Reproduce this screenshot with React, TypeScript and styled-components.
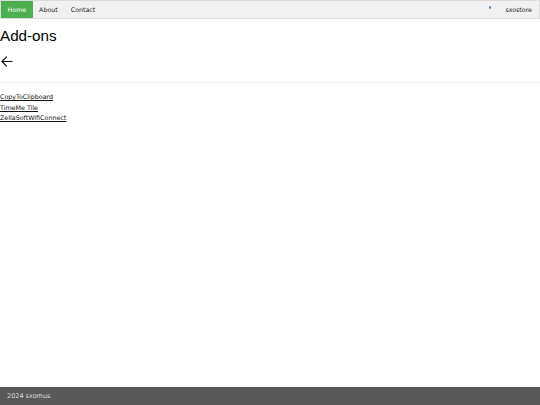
import React from "react";
import styled, { createGlobalStyle } from "styled-components";

const Global = createGlobalStyle`
  html, body { margin: 0; padding: 0; background: #fff; }
  body { font-family: "DejaVu Sans", Verdana, sans-serif; }
  #root { min-height: 405px; display: flex; flex-direction: column; }
`;

const Page = styled.div`
  min-height: 405px;
  display: flex;
  flex-direction: column;
`;

const NavBar = styled.nav`
  display: flex;
  align-items: stretch;
  height: 17px;
  background: #f1f1f1;
  border: 1px solid #dcdcdc;
  font-size: 6.3px;
`;

const NavLink = styled.a<{ $active?: boolean }>`
  display: flex;
  align-items: center;
  padding: 0 6.5px;
  color: ${(p) => (p.$active ? "#fff" : "#222")};
  background: ${(p) => (p.$active ? "#4caf50" : "transparent")};
  text-decoration: none;
`;

const Spacer = styled.div`
  flex: 1;
`;

const Status = styled.span`
  align-self: flex-start;
  margin-top: 5px;
  width: 2.5px;
  height: 2.5px;
  border-radius: 50%;
  background: #5b8fd6;
  margin-right: 14px;
`;

const Brand = styled.span`
  display: flex;
  align-items: center;
  padding-right: 7px;
  color: #222;
`;

const Main = styled.main`
  flex: 1;
  display: flex;
  flex-direction: column;
`;

const Title = styled.h1`
  margin: 8px 0 0;
  font-family: "Liberation Sans", Arial, sans-serif;
  font-weight: normal;
  font-size: 15.2px;
  line-height: 17px;
  color: #000;
`;

const BackButton = styled.button`
  display: flex;
  align-items: center;
  margin: 11px 0 0 1px;
  padding: 0;
  width: 14px;
  height: 12px;
  border: none;
  background: none;
  color: #111;
`;

const Divider = styled.hr`
  margin: 15px 0 0;
  border: none;
  border-top: 1px solid #f0f0f0;
`;

const LinkList = styled.ul`
  list-style: none;
  margin: 9px 0 0;
  padding: 0;
  font-size: 6.35px;
  line-height: 10.5px;
`;

const AddonLink = styled.a`
  color: #111;
  text-decoration: underline;
`;

const Footer = styled.footer`
  height: 18px;
  display: flex;
  align-items: center;
  padding-left: 7px;
  background: #595959;
  color: #ddd;
  font-size: 6.5px;
`;

const addons = ["CopyToClipboard", "TimeMe Tile", "ZellaSoftWifiConnect"];

export default function App() {
  return (
    <Page>
      <Global />
      <NavBar>
        <NavLink $active href="#">Home</NavLink>
        <NavLink href="#">About</NavLink>
        <NavLink href="#">Contact</NavLink>
        <Spacer />
        <Status />
        <Brand>sxostore</Brand>
      </NavBar>
      <Main>
        <Title>Add-ons</Title>
        <BackButton aria-label="Back">
          <svg width="12" height="11" viewBox="0 0 12 11" fill="none" stroke="currentColor" strokeWidth="1.2">
            <path d="M11.5 5.5H1M5.8 0.7L1 5.5l4.8 4.8" />
          </svg>
        </BackButton>
        <Divider />
        <LinkList>
          {addons.map((a) => (
            <li key={a}>
              <AddonLink href="#">{a}</AddonLink>
            </li>
          ))}
        </LinkList>
      </Main>
      <Footer>2024 sxomus</Footer>
    </Page>
  );
}
